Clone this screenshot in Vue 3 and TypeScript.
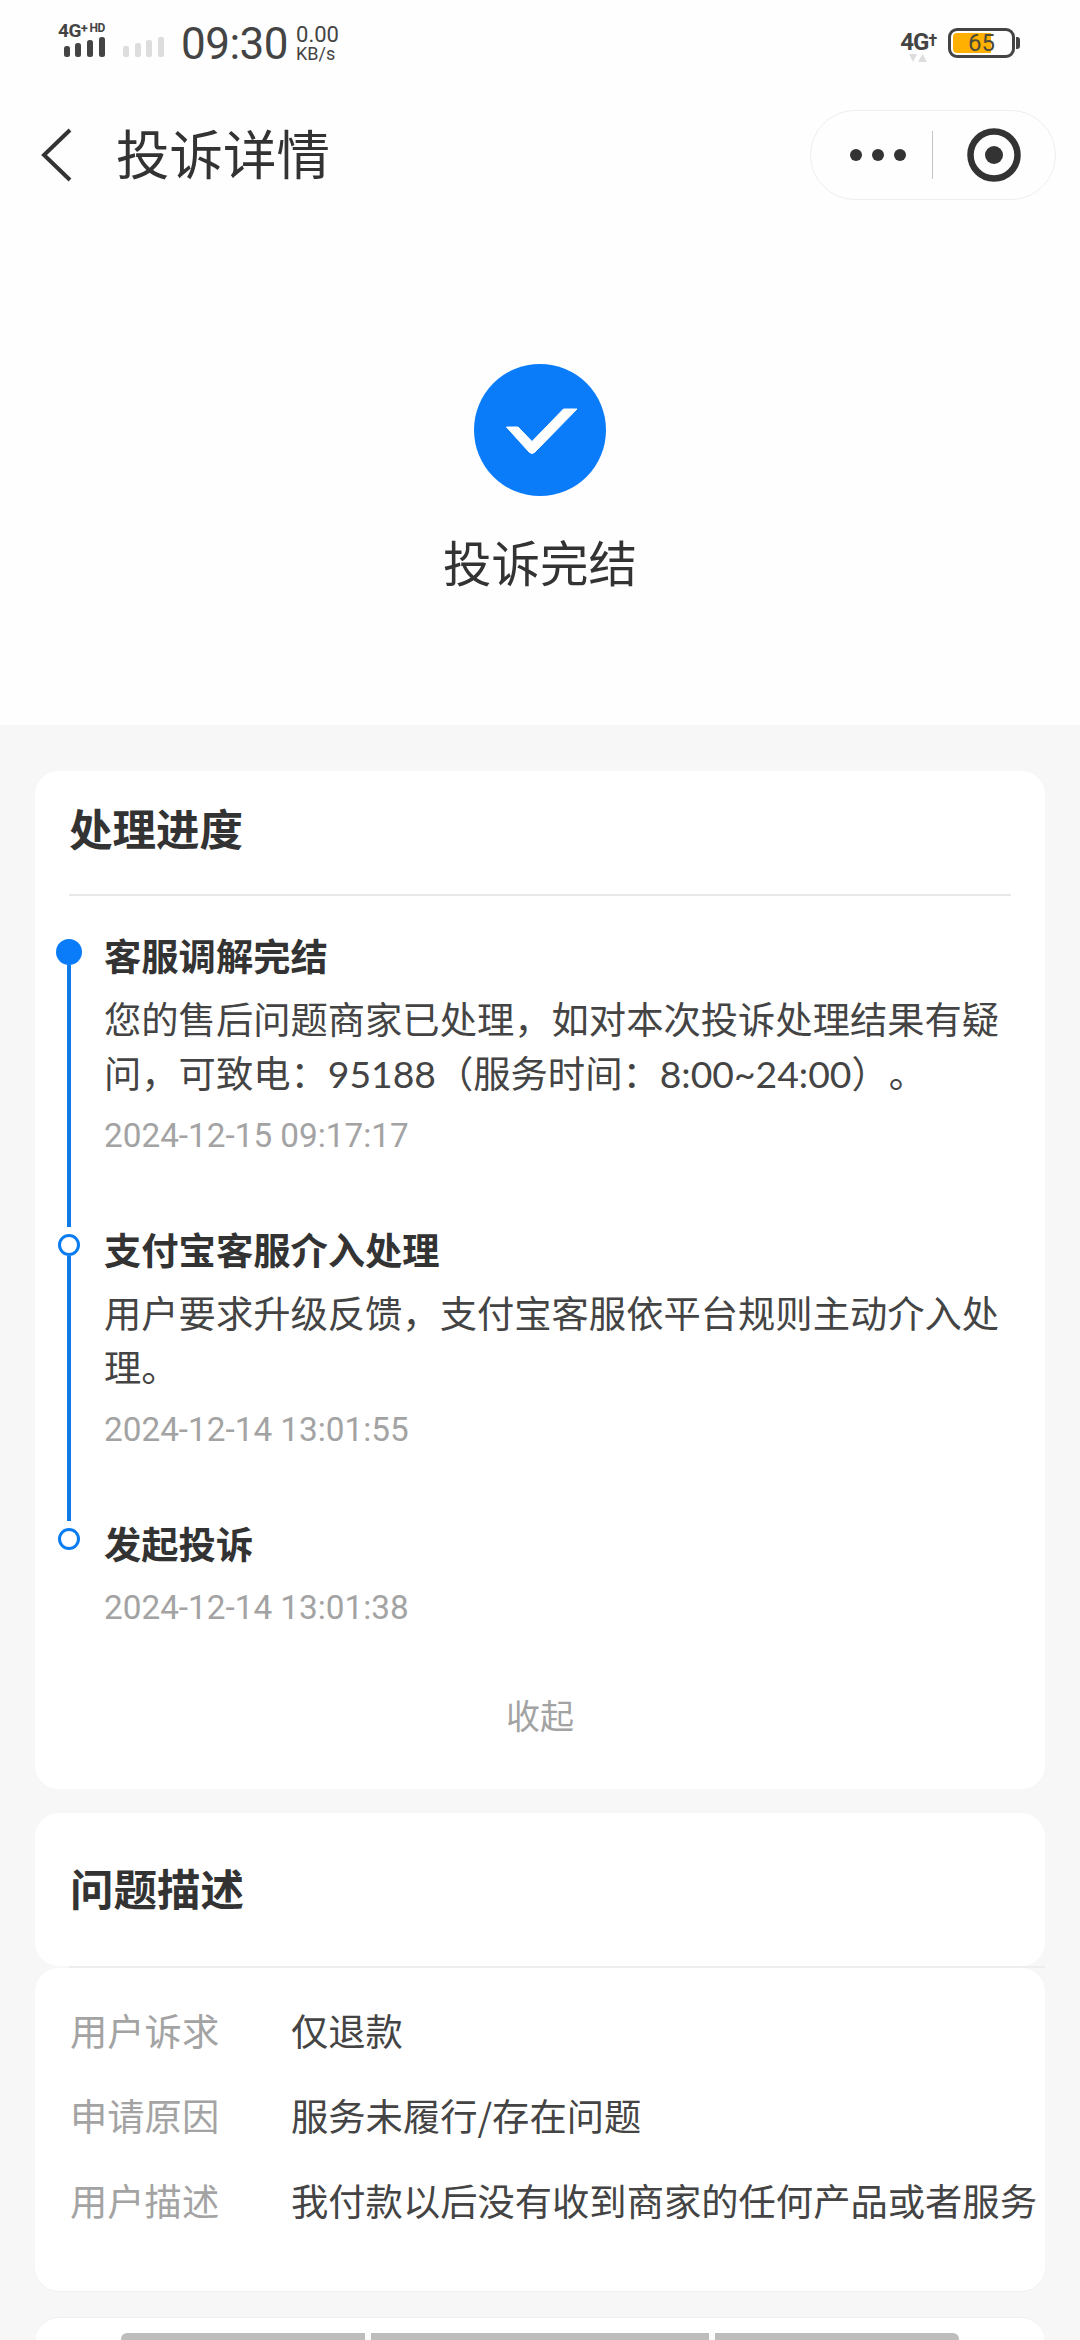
<script setup lang="ts">
interface Step {
  title: string
  text?: string
  time: string
  last?: boolean
}

const steps: Step[] = [
  {
    title: '客服调解完结',
    text: '您的售后问题商家已处理，如对本次投诉处理结果有疑问，可致电：95188（服务时间：8:00~24:00）。',
    time: '2024-12-15 09:17:17',
  },
  {
    title: '支付宝客服介入处理',
    text: '用户要求升级反馈，支付宝客服依平台规则主动介入处理。',
    time: '2024-12-14 13:01:55',
  },
  { title: '发起投诉', time: '2024-12-14 13:01:38', last: true },
]

const rows = [
  { label: '用户诉求', value: '仅退款' },
  { label: '申请原因', value: '服务未履行/存在问题' },
  { label: '用户描述', value: '我付款以后没有收到商家的任何产品或者服务' },
]
</script>

<template>
  <div class="page">
    <div class="top">
      <div class="status">
        <div class="net">
          <div class="net-label">4G<span class="plus">+</span><span class="hd">HD</span></div>
          <svg class="bars" width="41" height="20" viewBox="0 0 41 20">
            <rect x="0" y="9" width="6" height="11" rx="2.500" fill="#444" />
            <rect x="11" y="6" width="6" height="14" rx="2.500" fill="#444" />
            <rect x="23" y="3" width="6" height="17" rx="2.500" fill="#444" />
            <rect x="35" y="0" width="6" height="20" rx="2.500" fill="#444" />
          </svg>
        </div>
        <svg class="sim2" width="41" height="20" viewBox="0 0 41 20">
          <rect x="0" y="9" width="6" height="11" rx="2" fill="#ddd" />
          <rect x="12" y="6" width="6" height="14" rx="2" fill="#ddd" />
          <rect x="23" y="3" width="6" height="17" rx="2" fill="#ddd" />
          <rect x="35" y="0" width="6" height="20" rx="2" fill="#ddd" />
        </svg>
        <span class="clock">09:30</span>
        <div class="speed"><span>0.00</span><span class="unit">KB/s</span></div>
        <div class="status-right">
          <div class="net2">
            <span class="net2-label">4G<i>†</i></span>
            <svg width="18" height="10" viewBox="0 0 18 10">
              <path d="M0 1h8l-4 8z" fill="#ddd" />
              <path d="M9 9h9l-4.500-8z" fill="#ddd" />
            </svg>
          </div>
          <div class="battery">
            <div class="battery-fill"></div>
            <span class="battery-num">65</span>
          </div>
          <div class="battery-tip"></div>
        </div>
      </div>

      <div class="nav">
        <svg class="back" width="34" height="54" viewBox="0 0 34 54">
          <path d="M30 2 L4 27 L30 52" fill="none" stroke="#333" stroke-width="4" />
        </svg>
        <h1 class="nav-title">投诉详情</h1>
        <div class="capsule">
          <div class="dots"><i></i><i></i><i></i></div>
          <div class="capsule-line"></div>
          <svg width="54" height="54" viewBox="0 0 54 54">
            <circle cx="27" cy="27" r="23.500" fill="none" stroke="#333" stroke-width="6.500" />
            <circle cx="27" cy="27" r="9" fill="#333" />
          </svg>
        </div>
      </div>

      <div class="hero">
        <svg width="132" height="132" viewBox="0 0 132 132">
          <circle cx="66" cy="66" r="66" fill="#0a7cf9" />
          <path
            d="M32.500 63 H44 L58 77.500 L89.500 45 H103 L61 88 Q58 91 55 88 Z"
            fill="#fff"
            stroke="#fff"
            stroke-width="1"
            stroke-linejoin="round"
          />
        </svg>
        <div class="hero-text">投诉完结</div>
      </div>
    </div>

    <div class="cards">
      <section class="card progress">
        <h2 class="card-title">处理进度</h2>
        <div class="divider"></div>
        <div class="timeline">
          <div v-for="(step, i) in steps" :key="step.title" class="step" :class="{ last: step.last }">
            <div class="rail">
              <span class="dot" :class="{ active: i === 0 }"></span>
              <span v-if="!step.last" class="rail-line"></span>
            </div>
            <div class="step-body">
              <div class="step-title">{{ step.title }}</div>
              <p v-if="step.text" class="step-text">{{ step.text }}</p>
              <div class="step-time">{{ step.time }}</div>
            </div>
          </div>
        </div>
        <div class="collapse">收起</div>
      </section>

      <section class="card desc-head">
        <h2 class="card-title">问题描述</h2>
      </section>
      <section class="card desc">
        <div v-for="row in rows" :key="row.label" class="row">
          <span class="row-label">{{ row.label }}</span>
          <span class="row-value">{{ row.value }}</span>
        </div>
      </section>

      <section class="card next">
        <div class="redact">
          <span class="r1"></span>
          <span class="r2"></span>
          <span class="r3"></span>
        </div>
      </section>
    </div>
  </div>
</template>

<style>
html,
body {
  margin: 0;
  background: #f7f7f7;
}
</style>

<style scoped>
.page {
  width: 1080px;
  height: 2340px;
  overflow: hidden;
  background: #f7f7f7;
  color: #333;
  font-family: 'Noto Sans CJK SC', 'Noto Sans', sans-serif;
}

.top {
  height: 725px;
  background: #fefefe;
}

.status {
  height: 88px;
  display: flex;
  align-items: center;
  padding: 0 58px;
  box-sizing: border-box;
  color: #444;
  font-family: Roboto, sans-serif;
}

.net {
  width: 54px;
  display: flex;
  flex-direction: column;
  margin-top: -9px;
}

.net-label {
  display: flex;
  align-items: flex-start;
  font-size: 19px;
  line-height: 17px;
  font-weight: 700;
  white-space: nowrap;
  letter-spacing: -0.5px;
}

.plus {
  font-size: 13px;
  line-height: 13px;
}

.hd {
  font-size: 12px;
  line-height: 13px;
  margin-left: 2px;
}

.bars {
  margin: -2px 0 0 6px;
}

.sim2 {
  margin: 6px 0 0 11px;
}

.clock {
  margin-left: 17px;
  font-size: 44px;
  line-height: 48px;
  letter-spacing: -0.5px;
}

.speed {
  margin-left: 8px;
  display: flex;
  flex-direction: column;
  font-size: 22px;
  line-height: 19px;
}

.speed .unit {
  font-size: 18px;
}

.status-right {
  margin-left: auto;
  display: flex;
  align-items: center;
  margin-right: 2px;
}

.net2 {
  display: flex;
  flex-direction: column;
  align-items: center;
  margin-right: 12px;
  margin-top: 4px;
}

.net2-label {
  font-size: 24px;
  line-height: 22px;
  font-weight: 700;
  letter-spacing: -1px;
}

.net2-label i {
  font-style: normal;
  font-size: 16px;
  vertical-align: 4px;
}

.battery {
  position: relative;
  width: 67px;
  height: 30px;
  box-sizing: border-box;
  border: 3px solid #444;
  border-radius: 9px;
  padding: 2px;
  margin-top: -2px;
}

.battery-fill {
  width: 38px;
  height: 100%;
  background: #ffb000;
  border-radius: 4px 0 0 4px;
}

.battery-num {
  position: absolute;
  left: 0;
  right: 0;
  top: 0;
  text-align: center;
  font-size: 24px;
  line-height: 24px;
  color: #4a4a3a;
}

.battery-tip {
  width: 4px;
  height: 12px;
  background: #444;
  border-radius: 0 3px 3px 0;
  margin-left: 1px;
  margin-top: -2px;
}

.nav {
  height: 90px;
  margin-top: 22px;
  display: flex;
  align-items: center;
  padding: 0 24px 0 40px;
}

.nav-title {
  margin: -6px 0 0 42px;
  font-size: 53.500px;
  line-height: 90px;
  font-weight: 400;
  color: #333;
}

.capsule {
  margin-left: auto;
  width: 246px;
  height: 90px;
  box-sizing: border-box;
  border: 1px solid #eee;
  border-radius: 45px;
  display: flex;
  align-items: center;
  padding-left: 39px;
}

.dots {
  display: flex;
  gap: 10px;
}

.dots i {
  width: 12px;
  height: 12px;
  border-radius: 50%;
  background: #333;
}

.capsule-line {
  width: 1px;
  height: 48px;
  background: #c4c4c4;
  margin: 0 34px 0 26px;
}

.hero {
  margin-top: 164px;
  display: flex;
  flex-direction: column;
  align-items: center;
}

.hero-text {
  margin-top: 30px;
  font-size: 48.500px;
  line-height: 70px;
  color: #333;
}

.cards {
  padding: 46px 35px 0;
}

.card {
  background: #fff;
  border-radius: 24px;
}

.progress {
  height: 1018px;
  padding: 27px 34px 0;
  box-sizing: border-box;
}

.card-title {
  margin: 0;
  font-size: 43.500px;
  line-height: 60px;
  font-weight: 700;
  color: #333;
}

.divider {
  height: 2px;
  margin-top: 36px;
  background: #e8e8e8;
}

.timeline {
  margin-top: 32px;
}

.step {
  display: flex;
  min-height: 294px;
  margin-left: -25px;
}

.step.last {
  min-height: 0;
}

.rail {
  width: 50px;
  flex: none;
  display: flex;
  flex-direction: column;
  align-items: center;
  margin-right: 10px;
}

.dot {
  width: 22px;
  height: 22px;
  flex: none;
  margin-top: 12px;
  box-sizing: border-box;
  border: 3.500px solid #0a7cf2;
  border-radius: 50%;
  background: #fff;
}

.dot.active {
  width: 26px;
  height: 26px;
  margin-top: 11px;
  border: none;
  background: #0a7cf9;
}

.rail-line {
  flex: 1;
  width: 4px;
  background: #0f7ae5;
  margin-bottom: -5px;
}

.step-body {
  flex: 1;
  min-width: 0;
}

.step-title {
  font-size: 37.300px;
  line-height: 54px;
  font-weight: 700;
  color: #333;
}

.step-text {
  margin: 11px 0 8px;
  font-family: Lato, 'Noto Sans CJK SC', sans-serif;
  font-size: 37.300px;
  line-height: 54px;
  color: #444;
  text-spacing-trim: space-all;
}

.step-title + .step-time {
  margin-top: 11px;
}

.step-time {
  font-family: Roboto, sans-serif;
  font-size: 33.300px;
  line-height: 54px;
  color: #a3a3a3;
}

.collapse {
  margin-top: 55px;
  text-align: center;
  font-size: 34px;
  line-height: 50px;
  color: #a3a3a3;
}

.desc-head {
  position: relative;
  margin-top: 24px;
  height: 153px;
  padding: 45px 35px 0;
  box-sizing: border-box;
}

.desc-head::after {
  content: '';
  position: absolute;
  left: 34px;
  right: 0;
  bottom: -2px;
  height: 2px;
  background: #eee;
}

.desc {
  margin-top: 2px;
  height: 323px;
  padding-top: 35px;
  box-sizing: border-box;
  box-shadow: 0 1px 0 #f0f0f0;
  overflow: hidden;
}

.row {
  height: 85px;
  display: flex;
  padding-left: 35px;
  font-size: 37.300px;
  line-height: 54px;
  white-space: nowrap;
}

.row-label {
  width: 221px;
  flex: none;
  color: #a3a3a3;
}

.row-value {
  color: #444;
}

.next {
  margin-top: 27px;
  height: 60px;
  padding: 15px 86px 0;
  box-shadow: 0 -1px 0 #f0f0f0;
}

.redact {
  display: flex;
  height: 24px;
  gap: 6px;
}

.redact span {
  background: #bdbdbd;
}

.r1 {
  width: 244px;
  border-radius: 6px 0 0 0;
}

.r2 {
  width: 338px;
}

.r3 {
  width: 244px;
  border-radius: 0 6px 0 0;
}
</style>
